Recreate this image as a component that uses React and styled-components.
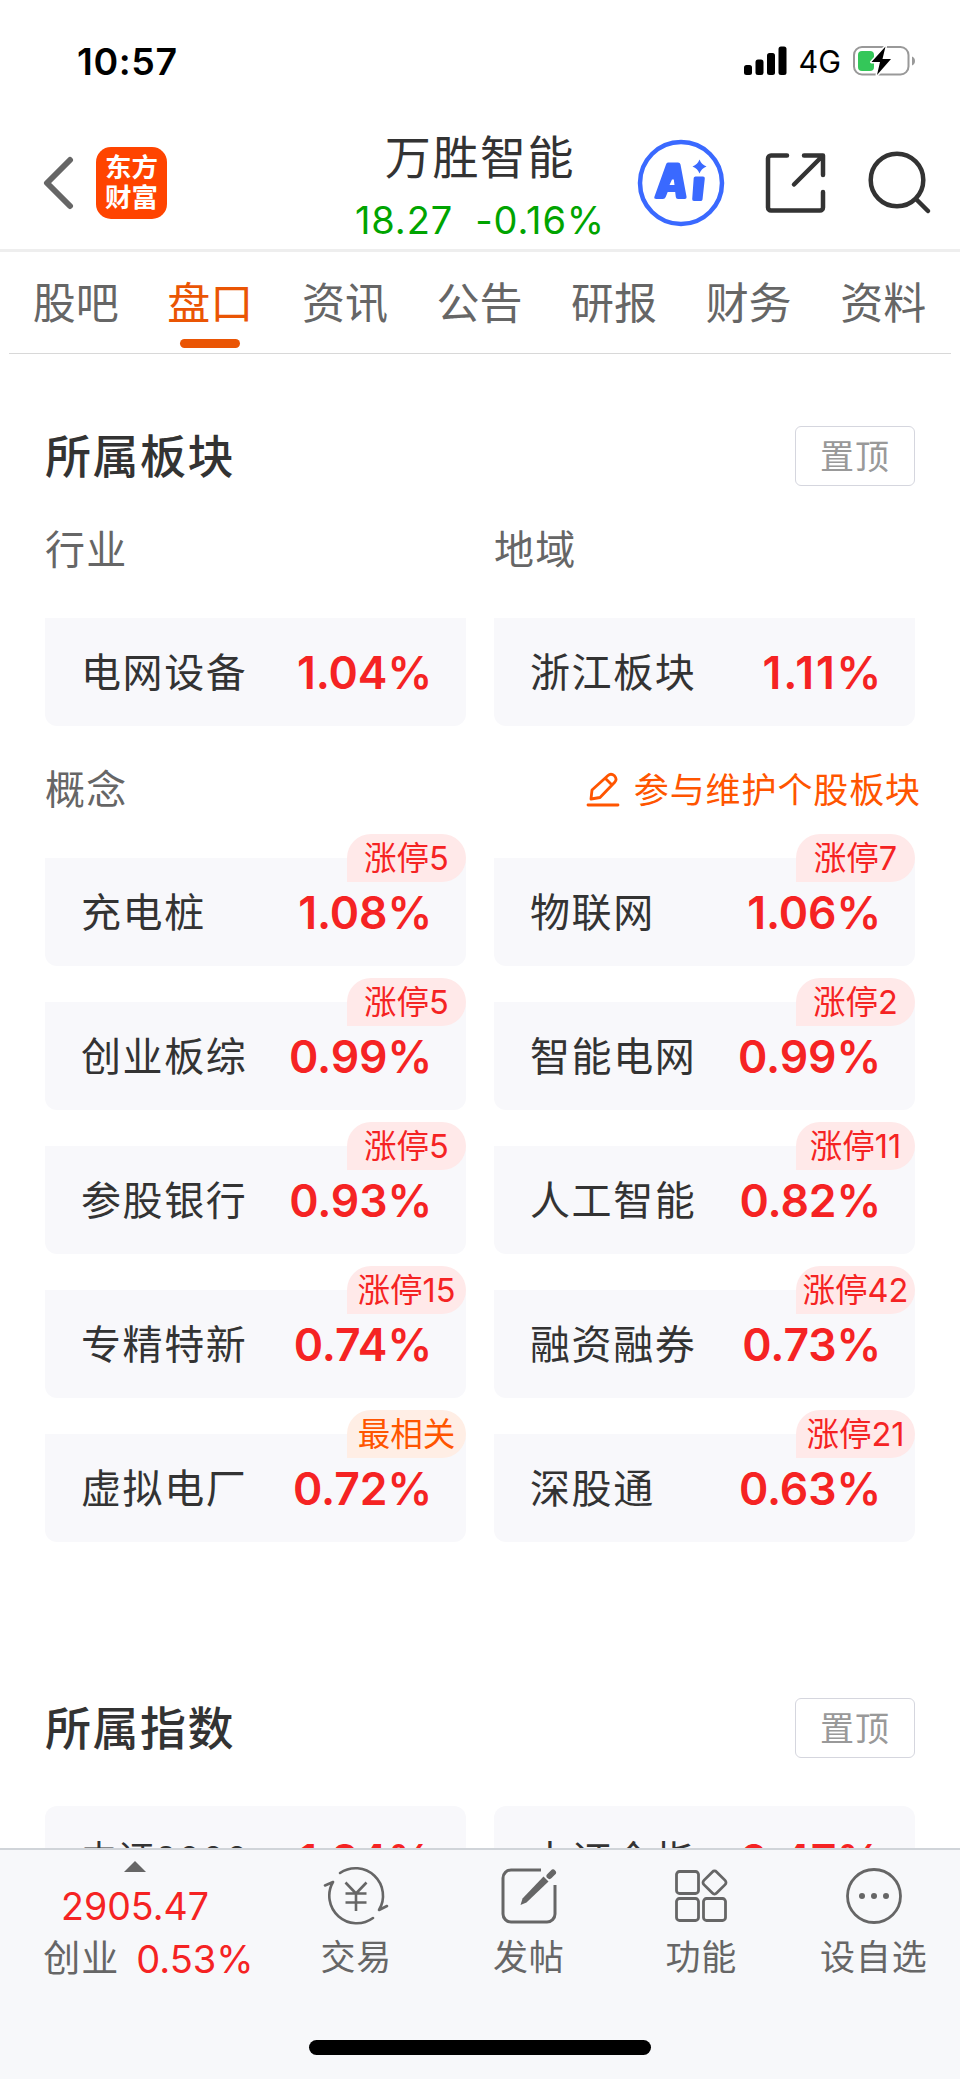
import React from "react";
import styled, { createGlobalStyle } from "styled-components";

const TABS = ["股吧", "盘口", "资讯", "公告", "研报", "财务", "资料"];

const CONCEPTS = [
    { name: "充电桩", value: "1.08%", tag: "涨停5" },
    { name: "物联网", value: "1.06%", tag: "涨停7" },
    { name: "创业板综", value: "0.99%", tag: "涨停5" },
    { name: "智能电网", value: "0.99%", tag: "涨停2" },
    { name: "参股银行", value: "0.93%", tag: "涨停5" },
    { name: "人工智能", value: "0.82%", tag: "涨停11" },
    { name: "专精特新", value: "0.74%", tag: "涨停15" },
    { name: "融资融券", value: "0.73%", tag: "涨停42" },
    { name: "虚拟电厂", value: "0.72%", tag: "最相关", hot: true },
    { name: "深股通", value: "0.63%", tag: "涨停21" },
];

const SignalIcon = () => (
    <svg width="43" height="30" viewBox="0 0 43 30">
        <rect x="0" y="19" width="8" height="10" rx="2.5" />
        <rect x="11.5" y="13.5" width="8" height="15.5" rx="2.5" />
        <rect x="23" y="7" width="8" height="22" rx="2.5" />
        <rect x="34.5" y="0.5" width="8" height="28.5" rx="2.5" />
    </svg>
);

const BatteryIcon = () => (
    <svg width="63" height="32" viewBox="0 0 63 32">
        <rect x="1" y="2" width="54.5" height="27.5" rx="8" fill="none" stroke="#999" strokeWidth="2" />
        <path d="M59 11.5c4 1.5 4 7.5 0 9z" fill="#999" />
        <rect x="5" y="6" width="16" height="20" rx="4" fill="#34c759" />
        <path
            d="M32.5 1.5L18.5 17h8.5l-3 13L38 14h-8.5z"
            fill="#000"
            stroke="#fff"
            strokeWidth="3"
            strokeLinejoin="round"
            paintOrder="stroke"
        />
    </svg>
);

const BackIcon = () => (
    <svg width="32" height="54" viewBox="0 0 32 54">
        <path d="M27 4L4 27l23 23" fill="none" stroke="#666" strokeWidth="6" strokeLinecap="round" strokeLinejoin="round" />
    </svg>
);

const AiIcon = () => (
    <svg width="88" height="88" viewBox="0 0 88 88">
        <circle cx="44" cy="44" r="41" fill="none" stroke="#3a69ff" strokeWidth="4.5" />
        <path
            fillRule="evenodd"
            fill="#3a69ff"
            d="M31 23.5h10q2 0 2.5 2l6 32q.4 2.5-2 2.5h-6.5q-2 0-2.2-2l-.6-5h-7.5l-2 5q-.8 2-2.7 2h-6.5q-3 0-2-2.5l11.5-32q.6-2 2-2zM35 40.5l-2.5 5.5h5l-.7-5.5z"
        />
        <path fill="#3a69ff" d="M58.5 37.5h7.5q2 0 1.8 2l-2.3 21q-.3 1.5-2 1.5h-6.5q-2 0-1.8-2l1.5-21q.2-1.5 1.8-1.5z" />
        <path fill="#3a69ff" d="M62.5 20.500q1.800 5 7 7q-5.200 2-7 7q-1.800-5-7-7q5.200-2 7-7z" />
    </svg>
);

const ShareIcon = () => (
    <svg width="64" height="64" viewBox="0 0 64 64" fill="none" stroke="#333" strokeWidth="4.5" strokeLinecap="round" strokeLinejoin="round">
        <path d="M23 4.5H7a3 3 0 0 0-3 3v49a3 3 0 0 0 3 3h49a3 3 0 0 0 3-3V41" />
        <path d="M40 4.5h19V24M57 6.5L30 33.5" />
    </svg>
);

const SearchIcon = () => (
    <svg width="66" height="66" viewBox="0 0 66 66" fill="none" stroke="#333" strokeWidth="4.5" strokeLinecap="round">
        <circle cx="30" cy="30" r="26.3" />
        <path d="M49.5 49.5L61 61" />
    </svg>
);

const EditIcon = () => (
    <svg width="34" height="38" viewBox="0 0 34 38" fill="none" stroke="#ff5500" strokeWidth="2.8" strokeLinecap="round" strokeLinejoin="round">
        <path d="M5 28l1-9L22 4.5q3-2.7 6.5.3q3 3.5.2 6.5L14 26.5zM19.5 7.5l6.5 6.5" />
        <path d="M2 34h30" />
    </svg>
);

const TradeIcon = () => (
    <svg width="66" height="60" viewBox="0 0 66 60" fill="none" stroke="#666" strokeWidth="2.6" strokeLinecap="round" strokeLinejoin="round">
        <path d="M17 8A27.5 27.5 0 0 1 56 45l8-4" />
        <path d="M50 53A27.5 27.5 0 0 1 10 17l-8 3.5" />
        <path d="M22.5 17.5L33 28.5l10.5-11M22.5 28.5h21M22.5 37.5h21M33 28.5v17.5" strokeLinecap="butt" />
    </svg>
);

const PostIcon = () => (
    <svg width="60" height="60" viewBox="0 0 60 60" fill="none" stroke="#666" strokeWidth="3">
        <path d="M42 5H12a8 8 0 0 0-8 8v36a8 8 0 0 0 8 8h36a8 8 0 0 0 8-8V20" />
        <path d="M44.5 11.5l5 5L27.5 37.5L21.5 40l2-6.5z" fill="#666" stroke="none" />
        <path d="M50.5 11L54 7.5" strokeWidth="6" strokeLinecap="round" />
    </svg>
);

const FeatureIcon = () => (
    <svg width="60" height="60" viewBox="0 0 60 60" fill="none" stroke="#666" strokeWidth="2.8">
        <rect x="5.5" y="6.5" width="22" height="22" rx="3" />
        <rect x="5.5" y="33.5" width="22" height="22" rx="3" />
        <rect x="32.5" y="33.5" width="22" height="22" rx="3" />
        <rect x="34.5" y="8.5" width="18" height="18" rx="3" transform="rotate(45 43.5 17.5)" />
    </svg>
);

const MoreIcon = () => (
    <svg width="60" height="60" viewBox="0 0 60 60">
        <circle cx="30" cy="31" r="26.5" fill="none" stroke="#666" strokeWidth="2.8" />
        <circle cx="18" cy="31" r="3" fill="#666" />
        <circle cx="30" cy="31" r="3" fill="#666" />
        <circle cx="42" cy="31" r="3" fill="#666" />
    </svg>
);

const MENU = [
    { label: "交易", icon: <TradeIcon /> },
    { label: "发帖", icon: <PostIcon /> },
    { label: "功能", icon: <FeatureIcon /> },
    { label: "设自选", icon: <MoreIcon /> },
];

const App = () => {
    return (
        <Page>
            <GlobalStyle />
            <StatusBar>
                <Time>10:57</Time>
                <StatusRight>
                    <SignalIcon />
                    <Network>4G</Network>
                    <BatteryIcon />
                </StatusRight>
            </StatusBar>
            <Header>
                <HeaderLeft>
                    <BackIcon />
                    <Logo>
                        <span>东方</span>
                        <span>财富</span>
                    </Logo>
                </HeaderLeft>
                <Stock>
                    <StockName>万胜智能</StockName>
                    <StockPrice>
                        <span>18.27</span>
                        <span>-0.16%</span>
                    </StockPrice>
                </Stock>
                <HeaderRight>
                    <AiIcon />
                    <ShareIcon />
                    <SearchIcon />
                </HeaderRight>
            </Header>
            <Tabs>
                {TABS.map((tab) => (
                    <Tab key={tab} $active={tab === "盘口"}>
                        {tab}
                    </Tab>
                ))}
            </Tabs>
            <Content>
                <SectionHead>
                    <SectionTitle>所属板块</SectionTitle>
                    <PinButton>置顶</PinButton>
                </SectionHead>
                <LabelRow>
                    <Label>行业</Label>
                    <Label>地域</Label>
                </LabelRow>
                <Cards>
                    <Card>
                        <CardName>电网设备</CardName>
                        <CardValue>1.04%</CardValue>
                    </Card>
                    <Card>
                        <CardName>浙江板块</CardName>
                        <CardValue $wide>1.11%</CardValue>
                    </Card>
                </Cards>
                <ConceptHead>
                    <Label>概念</Label>
                    <EditLink>
                        <EditIcon />
                        <EditText>参与维护个股板块</EditText>
                    </EditLink>
                </ConceptHead>
                <Cards>
                    {CONCEPTS.map((item) => (
                        <Card key={item.name}>
                            <CardName>{item.name}</CardName>
                            <CardValue>{item.value}</CardValue>
                            <Tag $hot={item.hot}>{item.tag}</Tag>
                        </Card>
                    ))}
                </Cards>
                <IndexSection>
                    <SectionHead>
                        <SectionTitle>所属指数</SectionTitle>
                        <PinButton>置顶</PinButton>
                    </SectionHead>
                    <IndexCards>
                        <Card $rounded>
                            <CardName $small>中证2000</CardName>
                            <CardValue>1.24%</CardValue>
                        </Card>
                        <Card $rounded>
                            <CardName>中证全指</CardName>
                            <CardValue>0.47%</CardValue>
                        </Card>
                    </IndexCards>
                </IndexSection>
            </Content>
            <BottomBar>
                <Menu>
                    <Market>
                        <Triangle />
                        <MarketIndex>2905.47</MarketIndex>
                        <MarketRow>
                            <MarketName>创业</MarketName>
                            <MarketRate>0.53%</MarketRate>
                        </MarketRow>
                    </Market>
                    {MENU.map((item) => (
                        <MenuItem key={item.label}>
                            {item.icon}
                            <MenuLabel>{item.label}</MenuLabel>
                        </MenuItem>
                    ))}
                </Menu>
                <HomeIndicator />
            </BottomBar>
        </Page>
    );
};

export default App;

const GlobalStyle = createGlobalStyle`
    * {
        box-sizing: border-box;
    }
    body {
        margin: 0;
        background: #fff;
        font-family: Inter, "Noto Sans CJK SC", sans-serif;
        font-weight: 400;
        color: #333;
    }
    svg {
        display: block;
        flex-shrink: 0;
    }
`;

const Page = styled.div`
    width: 960px;
    height: 2079px;
    display: flex;
    flex-direction: column;
    overflow: hidden;
    white-space: nowrap;
`;

const StatusBar = styled.div`
    height: 122px;
    flex-shrink: 0;
    display: flex;
    align-items: center;
    justify-content: space-between;
    padding: 0 44px 0 77px;
    color: #000;
`;

const Time = styled.div`
    font-size: 37.5px;
    font-weight: 600;
    letter-spacing: 0.6px;
    line-height: 44px;
    padding-top: 1px;
`;

const StatusRight = styled.div`
    display: flex;
    align-items: center;
`;

const Network = styled.div`
    font-size: 30.5px;
    line-height: 36px;
    margin: 2px 12px 0;
`;

const Header = styled.div`
    height: 130px;
    flex-shrink: 0;
    display: grid;
    grid-template-columns: 330px 300px 1fr;
    border-bottom: 3px solid #eee;
`;

const HeaderLeft = styled.div`
    display: flex;
    align-items: center;
    gap: 21px;
    padding: 0 0 6px 43px;
`;

const Logo = styled.div`
    width: 71px;
    height: 72px;
    border-radius: 15px;
    background: #ff4400;
    color: #fff;
    font-size: 26.5px;
    font-weight: 700;
    line-height: 30px;
    padding-bottom: 1px;
    display: flex;
    flex-direction: column;
    align-items: center;
    justify-content: center;
`;

const Stock = styled.div`
    display: flex;
    flex-direction: column;
    align-items: center;
    padding-top: 7px;
`;

const StockName = styled.div`
    font-size: 46px;
    letter-spacing: 1.6px;
    line-height: 56px;
`;

const StockPrice = styled.div`
    display: flex;
    gap: 22px;
    font-size: 38px;
    letter-spacing: 0.9px;
    line-height: 46px;
    margin-top: 12px;
    color: #00a400;
`;

const HeaderRight = styled.div`
    display: flex;
    align-items: center;
    padding: 0 0 5px 7px;

    svg + svg {
        margin-left: 39px;
    }
`;

const Tabs = styled.div`
    height: 102px;
    flex-shrink: 0;
    margin: 0 9px;
    display: grid;
    grid-template-columns: repeat(7, 1fr);
    border-bottom: 1px solid #d8d8d8;
`;

const Tab = styled.div`
    display: flex;
    flex-direction: column;
    align-items: center;
    justify-content: space-between;
    padding: 21px 1px 5px 0;
    font-size: 43px;
    line-height: 60px;
    color: ${(props) => (props.$active ? "#ea5504" : "#666")};

    &::after {
        content: "";
        width: 60px;
        height: 9px;
        border-radius: 5px;
        background: ${(props) => (props.$active ? "#ea5504" : "transparent")};
    }
`;

const Content = styled.div`
    flex: 1;
    min-height: 0;
    overflow: hidden;
    padding: 72px 45px 0;
`;

const SectionHead = styled.div`
    height: 60px;
    display: flex;
    align-items: center;
    justify-content: space-between;
`;

const SectionTitle = styled.div`
    font-size: 46px;
    font-weight: 500;
    letter-spacing: 1.5px;
    line-height: 60px;
`;

const PinButton = styled.div`
    width: 120px;
    height: 60px;
    border: 1px solid #d5d6de;
    border-radius: 6px;
    font-size: 34px;
    letter-spacing: 1px;
    line-height: 60px;
    text-align: center;
    color: #999;
`;

const LabelRow = styled.div`
    display: grid;
    grid-template-columns: 1fr 1fr;
    column-gap: 28px;
    height: 132px;
    padding-top: 34px;
`;

const Label = styled.div`
    font-size: 40px;
    letter-spacing: 1.3px;
    line-height: 60px;
    color: #666;
`;

const Cards = styled.div`
    display: grid;
    grid-template-columns: 1fr 1fr;
    gap: 36px 28px;
`;

const Card = styled.div`
    position: relative;
    height: 108px;
    display: flex;
    align-items: center;
    justify-content: space-between;
    padding: 2px 34px 0 36px;
    background: #f8f8fb;
    border-radius: ${(props) => (props.$rounded ? "12px" : "0 0 12px 12px")};
`;

const CardName = styled.div`
    font-size: ${(props) => (props.$small ? "36px" : "40px")};
    letter-spacing: ${(props) => (props.$small ? "1px" : "1.6px")};
    margin-bottom: ${(props) => (props.$small ? "4px" : "0")};
    line-height: 60px;
`;

const CardValue = styled.div`
    font-size: 44.5px;
    font-weight: 600;
    letter-spacing: ${(props) => (props.$wide ? "1.8px" : "-0.1px")};
    margin-right: ${(props) => (props.$wide ? "-2px" : "0")};
    line-height: 54px;
    color: #f52323;
`;

const Tag = styled.div`
    position: absolute;
    top: -24px;
    right: 0;
    width: 119px;
    height: 48px;
    border-radius: 24px 24px 24px 0;
    font-size: 32.5px;
    line-height: 50px;
    text-align: center;
    color: ${(props) => (props.$hot ? "#ff5500" : "#f52323")};
    background: ${(props) => (props.$hot ? "#ffeee5" : "#ffe9e9")};
`;

const ConceptHead = styled.div`
    height: 132px;
    display: flex;
    justify-content: space-between;
    padding-top: 34px;
    margin-right: -6px;
`;

const EditLink = styled.div`
    display: flex;
    align-items: center;
    gap: 14px;
    height: 60px;
    color: #ff5500;
`;

const EditText = styled.div`
    font-size: 35px;
    letter-spacing: 0.9px;
    line-height: 60px;
`;

const IndexSection = styled.div`
    margin-top: 156px;
`;

const IndexCards = styled(Cards)`
    margin-top: 48px;
`;

const BottomBar = styled.div`
    height: 231px;
    flex-shrink: 0;
    display: flex;
    flex-direction: column;
    align-items: center;
    justify-content: space-between;
    padding-bottom: 24px;
    border-top: 2px solid #d0d4d9;
    background: #f7f8fa;
`;

const Menu = styled.div`
    align-self: stretch;
    display: grid;
    grid-template-columns: 270px repeat(4, 172.5px);
`;

const Market = styled.div`
    display: flex;
    flex-direction: column;
    align-items: center;
    padding-top: 11px;
`;

const Triangle = styled.div`
    border: 11px solid transparent;
    border-top-width: 0;
    border-bottom-color: #666;
`;

const MarketIndex = styled.div`
    font-size: 37.5px;
    line-height: 46px;
    margin-top: 12px;
    color: #f52323;
`;

const MarketRow = styled.div`
    display: flex;
    align-items: center;
    gap: 17px;
    line-height: 50px;
    margin-left: 27px;
    margin-top: 4px;
`;

const MarketName = styled.div`
    font-size: 37px;
    letter-spacing: 1px;
    color: #666;
`;

const MarketRate = styled.div`
    font-size: 38px;
    color: #f52323;
`;

const MenuItem = styled.div`
    display: flex;
    flex-direction: column;
    align-items: center;
    padding-top: 15px;
`;

const MenuLabel = styled.div`
    font-size: 35px;
    letter-spacing: 0.8px;
    line-height: 50px;
    margin-top: 7px;
    color: #666;
`;

const HomeIndicator = styled.div`
    width: 342px;
    height: 15px;
    border-radius: 8px;
    background: #000;
`;
